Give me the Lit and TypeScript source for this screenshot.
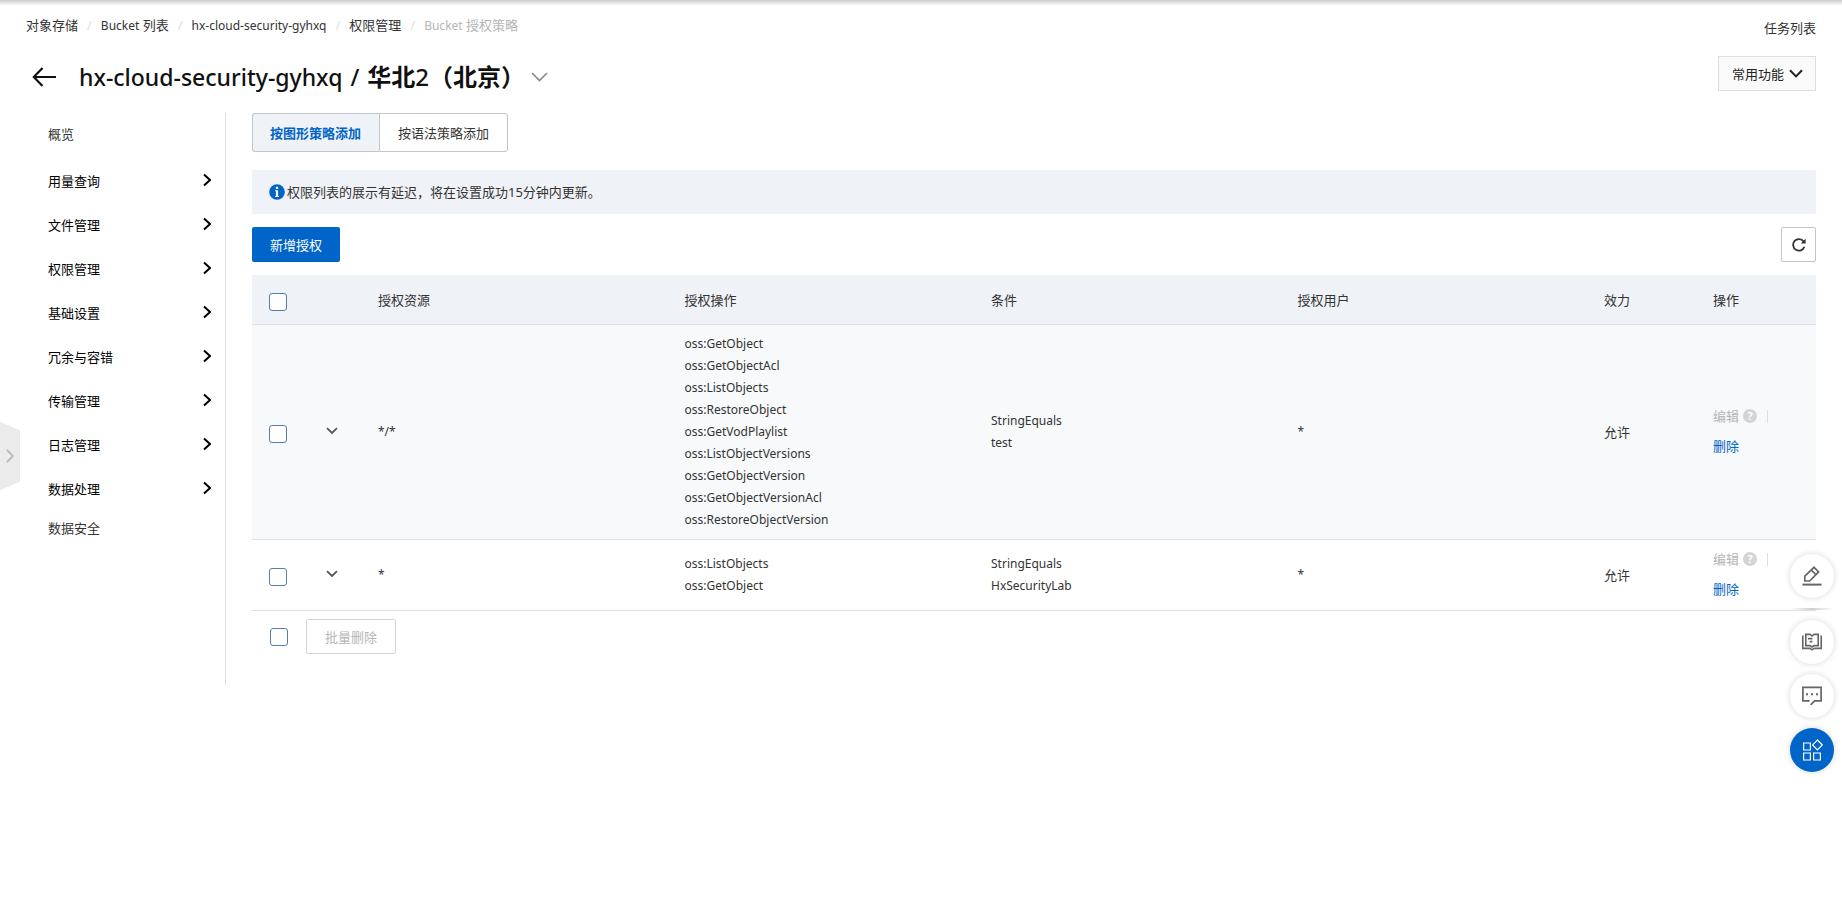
import { LitElement, html, css, svg } from "lit";
import { customElement, state } from "lit/decorators.js";
import { classMap } from "lit/directives/class-map.js";

interface Policy {
  id: string;
  resource: string;
  actions: string[];
  conditions: string[];
  user: string;
  effect: string;
}

const POLICIES: Policy[] = [
  {
    id: "p1",
    resource: "*/*",
    actions: [
      "oss:GetObject",
      "oss:GetObjectAcl",
      "oss:ListObjects",
      "oss:RestoreObject",
      "oss:GetVodPlaylist",
      "oss:ListObjectVersions",
      "oss:GetObjectVersion",
      "oss:GetObjectVersionAcl",
      "oss:RestoreObjectVersion",
    ],
    conditions: ["StringEquals", "test"],
    user: "*",
    effect: "允许",
  },
  {
    id: "p2",
    resource: "*",
    actions: ["oss:ListObjects", "oss:GetObject"],
    conditions: ["StringEquals", "HxSecurityLab"],
    user: "*",
    effect: "允许",
  },
];

const GROUPS = [
  "用量查询",
  "文件管理",
  "权限管理",
  "基础设置",
  "冗余与容错",
  "传输管理",
  "日志管理",
  "数据处理",
];

const CRUMBS = [
  html`对象存储`,
  html`<span class="latin">Bucket</span> 列表`,
  html`<span class="latin">hx-cloud-security-gyhxq</span>`,
  html`权限管理`,
];

const chevron = (w: number, h: number, d: string, stroke: number) => html`<svg
  width=${w}
  height=${h}
  viewBox="0 0 ${w} ${h}"
  fill="none"
  stroke="currentColor"
  stroke-width=${stroke}
  aria-hidden="true"
>
  ${svg`<path d=${d}/>`}
</svg>`;

@customElement("side-menu")
export class SideMenu extends LitElement {
  static styles = css`
    :host {
      display: block;
      flex: 0 0 225px;
      border-right: 1px solid #dedede;
    }
    ul {
      list-style: none;
      margin: 0;
      padding: 0 14px 0 48px;
    }
    a {
      display: flex;
      align-items: center;
      justify-content: space-between;
      height: 44px;
      color: #000;
      text-decoration: none;
    }
    .plain {
      color: #333;
    }
    .first {
      height: 42px;
      margin-bottom: 4px;
    }
    .last {
      height: 34px;
    }
    svg {
      margin-bottom: 3px;
    }
  `;
  render() {
    return html`<nav aria-label="Bucket">
      <ul>
        <li><a class="plain first" href="#">概览</a></li>
        ${GROUPS.map(
          (g) => html`<li>
            <a href="#">${g}${chevron(8, 14, "M1 1.5 L7 7 L1 12.5", 2)}</a>
          </li>`
        )}
        <li><a class="plain last" href="#">数据安全</a></li>
      </ul>
    </nav>`;
  }
}

@customElement("float-tools")
export class FloatTools extends LitElement {
  static styles = css`
    :host {
      position: fixed;
      right: 8px;
      top: 554px;
      display: flex;
      flex-direction: column;
      gap: 10px;
    }
    button {
      width: 44px;
      height: 44px;
      padding: 0;
      border: 0;
      border-radius: 50%;
      background: #fff;
      color: #666;
      box-shadow: 0 0 6px rgba(0, 0, 0, 0.16);
      display: flex;
      align-items: center;
      justify-content: center;
    }
    .primary {
      background: #0064c8;
      color: #fff;
    }
    .rule {
      height: 2px;
      background: linear-gradient(90deg, transparent, #cfcfd4, transparent);
    }
    svg {
      display: block;
      fill: none;
      stroke: currentColor;
    }
  `;
  render() {
    return html`
      <button aria-label="编辑">
        <svg width="20" height="20" viewBox="0 0 20 20" stroke-width="1.7">
          <path d="M2.8 15 V10.2 L12 1.3 L16.6 5.9 L7.7 15 Z M9.3 4 L13.9 8.6" />
          <path d="M0.5 18.6 H19.5" stroke-width="2" />
        </svg>
      </button>
      <div class="rule"></div>
      <button aria-label="文档">
        <svg width="20" height="18" viewBox="0 0 20 18" stroke-width="1.6">
          <path d="M10 3 L8 1.4 H3.8 V12.6 H8 L10 14 L12 12.6 H16.2 V1.4 H12 Z" />
          <path d="M0.8 2.4 V15.4 H8 L10 16.8 L12 15.4 H19.2 V2.4" />
          <path d="M6 5.6 H10.4 M7.6 8.6 H10.4" />
        </svg>
      </button>
      <button aria-label="反馈">
        <svg width="20" height="20" viewBox="0 0 20 20" stroke-width="1.7">
          <path d="M7.6 14.8 H0.9 V1.4 H19.1 V14.8 H12.6 L8.6 18.8" />
          <path d="M4 8.2 H6 M9 8.2 H11 M14 8.2 H16" stroke-width="2" />
        </svg>
      </button>
      <button class="primary" aria-label="更多">
        <svg width="22" height="22" viewBox="0 0 22 22" stroke-width="1.2">
          <path d="M2.6 4 H9.4 V11 H2.6 Z M2.6 14 H9.4 V21 H2.6 Z M12.6 14 H19.4 V21 H12.6 Z" />
          <path d="M16.4 1 L21.2 5.9 L16.4 10.8 L11.6 5.9 Z" />
        </svg>
      </button>
    `;
  }
}

@customElement("policy-table")
export class PolicyTable extends LitElement {
  @state() private selected = new Set<string>();

  static styles = css`
    :host {
      display: block;
    }
    table {
      width: 100%;
      table-layout: fixed;
      border-collapse: separate;
      border-spacing: 0;
    }
    .c-check {
      width: 57px;
    }
    .c-expand {
      width: 52px;
    }
    .c-effect {
      width: 109px;
    }
    .c-ops {
      width: 120px;
    }
    th {
      height: 49px;
      padding: 0 17px;
      text-align: left;
      font-weight: 400;
      background: #eff2f7;
      border-bottom: 1px solid #dee0e3;
    }
    td {
      padding: 8px 17px;
      border-bottom: 1px solid #dee0e3;
      line-height: 22px;
      vertical-align: middle;
    }
    .odd td {
      background: #f7f9fb;
    }
    .latin {
      font-size: 12px;
    }
    td.ops {
      padding-top: 4px;
      padding-bottom: 6px;
    }
    .line {
      display: flex;
      align-items: center;
      gap: 4px;
      height: 30px;
    }
    input {
      appearance: none;
      display: block;
      box-sizing: border-box;
      width: 18px;
      height: 18px;
      margin: 0;
      border: 1px solid #5a7da5;
      border-radius: 3px;
      background: #fff;
    }
    table input {
      margin-top: 4px;
    }
    input:checked {
      background: #0064c8;
    }
    button {
      font: inherit;
      padding: 0;
      border: 0;
      background: none;
      color: inherit;
    }
    .expand {
      display: flex;
      padding-bottom: 2px;
      color: #555;
    }
    .link {
      color: #0064c8;
      text-decoration: none;
    }
    .off {
      color: #b5b5b5;
    }
    .help {
      width: 14px;
      height: 14px;
      border-radius: 50%;
      background: #d4d4d4;
      color: #fff;
      font-size: 11px;
      line-height: 14px;
      font-weight: 700;
      text-align: center;
    }
    .sep {
      width: 1px;
      height: 13px;
      margin-left: 6px;
      background: #dedede;
    }
    .batch {
      display: flex;
      align-items: center;
      gap: 18px;
      padding: 8px 18px 31px;
    }
    .bulk {
      height: 35px;
      padding: 0 18px;
      border: 1px solid #d3d3d8;
      border-radius: 2px;
      background: #fff;
      color: #b5b5b5;
    }
  `;

  private toggle(id: string) {
    const next = new Set(this.selected);
    next.has(id) ? next.delete(id) : next.add(id);
    this.selected = next;
  }

  private toggleAll() {
    this.selected =
      this.selected.size === POLICIES.length ? new Set() : new Set(POLICIES.map((p) => p.id));
  }

  private row(p: Policy, i: number) {
    return html`<tr class=${classMap({ odd: i % 2 === 0 })}>
      <td>
        <input
          type="checkbox"
          aria-label="选择"
          .checked=${this.selected.has(p.id)}
          @change=${() => this.toggle(p.id)}
        />
      </td>
      <td>
        <button class="expand" aria-label="展开">
          ${chevron(12, 8, "M1 1.2 L6 6 L11 1.2", 1.8)}
        </button>
      </td>
      <td class="latin">${p.resource}</td>
      <td class="latin">${p.actions.map((a) => html`<div>${a}</div>`)}</td>
      <td class="latin">${p.conditions.map((c) => html`<div>${c}</div>`)}</td>
      <td class="latin">${p.user}</td>
      <td>${p.effect}</td>
      <td class="ops">
        <div class="line">
          <button class="off" disabled>编辑</button>
          <span class="help">?</span>
          <span class="sep"></span>
        </div>
        <div class="line"><a class="link" href="#">删除</a></div>
      </td>
    </tr>`;
  }

  render() {
    const all = this.selected.size === POLICIES.length;
    return html`
      <table>
        <colgroup>
          <col class="c-check" />
          <col class="c-expand" />
          <col />
          <col />
          <col />
          <col />
          <col class="c-effect" />
          <col class="c-ops" />
        </colgroup>
        <thead>
          <tr>
            <th>
              <input type="checkbox" aria-label="全选" .checked=${all} @change=${this.toggleAll} />
            </th>
            <th></th>
            <th>授权资源</th>
            <th>授权操作</th>
            <th>条件</th>
            <th>授权用户</th>
            <th>效力</th>
            <th>操作</th>
          </tr>
        </thead>
        <tbody>
          ${POLICIES.map((p, i) => this.row(p, i))}
        </tbody>
      </table>
      <div class="batch">
        <input type="checkbox" aria-label="全选" .checked=${all} @change=${this.toggleAll} />
        <button class="bulk" ?disabled=${this.selected.size === 0}>批量删除</button>
      </div>
    `;
  }
}

@customElement("app-root")
export class AppRoot extends LitElement {
  @state() private tab = 0;

  static styles = css`
    :host {
      display: block;
      min-height: 100vh;
      background: linear-gradient(#cccccc, #ffffff) top / 100% 6px no-repeat #fff;
      color: #333;
      font-family: "Noto Sans", "Noto Sans CJK SC", sans-serif;
      font-size: 13px;
      line-height: 20px;
    }
    header {
      display: flex;
      justify-content: space-between;
      padding: 15px 26px 19px;
    }
    .crumbs {
      display: flex;
      gap: 9px;
    }
    .crumbs a {
      color: #333;
      text-decoration: none;
    }
    .latin {
      font-size: 12px;
    }
    .slash {
      color: #dedede;
    }
    .current {
      color: #b5b5b5;
    }
    .heading {
      display: flex;
      align-items: center;
      margin-top: 24px;
      padding-left: 6px;
    }
    .icon {
      padding: 0;
      border: 0;
      background: none;
      display: flex;
      color: #111;
    }
    .faint {
      color: #888;
      margin-left: 6px;
    }
    h1 {
      display: flex;
      align-items: baseline;
      gap: 8px;
      margin: 0 0 0 23px;
      font-size: 23px;
      line-height: 34px;
      font-weight: 500;
      color: #111;
    }
    .region {
      font-size: 24px;
      font-weight: 700;
    }
    .digit {
      font-weight: 500;
    }
    .tools {
      display: flex;
      flex-direction: column;
      align-items: flex-end;
      gap: 18px;
      padding-top: 3px;
    }
    .tools a {
      color: #333;
      text-decoration: none;
    }
    .common {
      display: flex;
      align-items: center;
      gap: 5px;
      height: 35px;
      padding: 0 12px 0 13px;
      border: 1px solid #dedede;
      background: #fafafa;
      color: #222;
      font: inherit;
    }
    .body {
      display: flex;
    }
    main {
      flex: 1;
      min-width: 0;
      padding: 0 26px;
    }
    .tabs {
      display: flex;
    }
    .tab {
      height: 39px;
      padding: 0 18px;
      border: 1px solid #c0c6cc;
      background: #fff;
      color: #333;
      font: inherit;
    }
    .tab:first-child {
      padding-left: 17px;
      border-radius: 3px 0 0 3px;
      border-right-width: 0;
    }
    .tab:last-child {
      border-radius: 0 3px 3px 0;
    }
    .tab.on {
      background: #eff2f7;
      color: #0064c8;
      font-weight: 700;
    }
    .notice {
      display: flex;
      align-items: center;
      gap: 2px;
      height: 44px;
      margin-top: 18px;
      padding: 0 17px;
      border-radius: 2px;
      background: #eff2f7;
    }
    .bar {
      display: flex;
      justify-content: space-between;
      margin: 13px 0;
    }
    .add {
      height: 35px;
      padding: 0 18px;
      border: 0;
      border-radius: 2px;
      background: #0064c8;
      color: #fff;
      font: inherit;
    }
    .refresh {
      display: flex;
      align-items: center;
      justify-content: center;
      width: 35px;
      height: 35px;
      padding: 0;
      border: 1px solid #c0c6cc;
      border-radius: 2px;
      background: #fff;
      color: #333;
    }
    .handle {
      position: fixed;
      left: 0;
      top: 422px;
      display: flex;
      align-items: center;
      width: 20px;
      height: 68px;
      padding: 0 0 0 6px;
      border: 0;
      background: #ebebeb;
      color: #bbb;
      clip-path: polygon(0 0, 100% 12%, 100% 88%, 0 100%);
    }
  `;

  render() {
    return html`
      <header>
        <div>
          <nav class="crumbs" aria-label="面包屑">
            ${CRUMBS.map((c) => html`<a href="#">${c}</a><span class="slash">/</span>`)}
            <span class="current"><span class="latin">Bucket</span> 授权策略</span>
          </nav>
          <div class="heading">
            <button class="icon" aria-label="返回">
              <svg width="24" height="20" viewBox="0 0 24 20" fill="none" stroke="currentColor" stroke-width="2.2">
                <path d="M10.5 1 L1.8 10 L10.5 19 M1.8 10 H24" />
              </svg>
            </button>
            <h1>
              <span>hx-cloud-security-gyhxq</span>
              <span>/</span>
              <span class="region">华北<span class="digit">2</span>（北京）</span>
            </h1>
            <button class="icon faint" aria-label="切换 Bucket">
              ${chevron(17, 10, "M1 1 L8.5 8.6 L16 1", 1.6)}
            </button>
          </div>
        </div>
        <div class="tools">
          <a href="#">任务列表</a>
          <button class="common">常用功能 ${chevron(14, 9, "M1 1.2 L7 7.4 L13 1.2", 2)}</button>
        </div>
      </header>
      <div class="body">
        <side-menu></side-menu>
        <main>
          <div class="tabs">
            ${["按图形策略添加", "按语法策略添加"].map(
              (t, i) => html`<button
                class=${classMap({ tab: true, on: this.tab === i })}
                @click=${() => (this.tab = i)}
              >
                ${t}
              </button>`
            )}
          </div>
          <div class="notice">
            <svg width="16" height="16" viewBox="0 0 16 16" aria-hidden="true">
              <circle cx="8" cy="8" r="7.8" fill="#0064c8" />
              <path d="M6.9 2.8 H9.1 V4.9 H6.9 Z M6 6.2 H9.1 V12 H10 V13 H6 V12 H6.9 V7.2 H6 Z" fill="#fff" />
            </svg>
            <span>权限列表的展示有延迟，将在设置成功15分钟内更新。</span>
          </div>
          <div class="bar">
            <button class="add">新增授权</button>
            <button class="refresh" aria-label="刷新">
              <svg width="14" height="14" viewBox="0 0 14 14" fill="none" stroke="currentColor" stroke-width="1.8">
                <path d="M12.4 8.8 A5.8 5.8 0 1 1 11.6 3.4" />
                <path d="M13.6 0.8 V5.6 H8.8 Z" fill="currentColor" stroke="none" />
              </svg>
            </button>
          </div>
          <policy-table></policy-table>
        </main>
      </div>
      <button class="handle" aria-label="展开侧栏">${chevron(8, 14, "M1 1 L7 7 L1 13", 1.8)}</button>
      <float-tools></float-tools>
    `;
  }
}
